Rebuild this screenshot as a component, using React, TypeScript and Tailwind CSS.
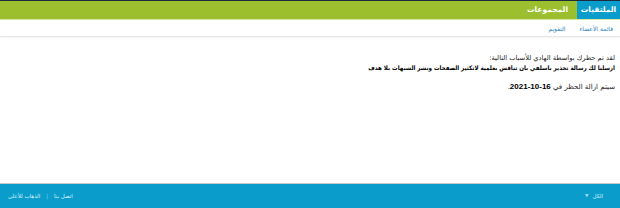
import React from 'react';

const App: React.FC = () => {
  return (
    <div dir="rtl" className="h-[208px] w-full flex flex-col bg-white font-['DejaVu_Sans',sans-serif] overflow-hidden">
      {/* top bar */}
      <div className="h-px bg-[#1d2c3d]"></div>
      <div className="h-[18px] bg-[#9cbf2e] flex items-stretch">
        <div className="w-[43px] bg-[#0a9dcc] flex items-center justify-center text-white text-[7.5px] font-bold">الملتقيات</div>
        <div className="px-[9px] flex items-center text-white text-[7.5px] font-bold">المجموعات</div>
      </div>
      <div className="h-px bg-[#d6e8a0]"></div>

      {/* sub nav */}
      <div className="h-[17px] flex items-center gap-[14px] pr-[7px] border-b border-[#e6e6e6] shadow-[0_1px_2px_rgba(0,0,0,0.05)]">
        <a className="text-[6px] text-[#2a7fc0]">قائمة الأعضاء</a>
        <a className="text-[6px] text-[#2a7fc0]">التقويم</a>
      </div>

      {/* content */}
      <div className="pr-[5px] pt-[16px] leading-[10px] text-[#222]">
        <div className="text-[6.7px]">لقد تم حظرك بواسطة الهادي للأسباب التالية:</div>
        <div className="font-bold text-black text-[6.2px] font-['DejaVu_Sans_Condensed','DejaVu_Sans',sans-serif]">ارسلنا لك رسالة تحذير باسلفي بان تناقش بعلمية لاتكثير الصفحات ونشر الشبهات بلا هدف</div>
        <div className="mt-[9px] text-[7px]">
          سيتم ازالة الحظر في <span className="font-bold text-[8px] text-black font-['Liberation_Sans',sans-serif]">16-10-2021</span>.
        </div>
      </div>

      <div className="flex-1"></div>

      {/* footer */}
      <div className="h-px bg-[#c8c8c8]"></div>
      <div className="h-[24px] bg-[#0a9dcc] flex items-center justify-between pr-[17px] pl-[8px] text-white text-[5.5px]">
        <div className="flex items-center gap-[4px]">
          <span className="text-[#cfeefa]">الكل</span>
          <span className="text-[4.5px] text-[#9fd9ef]">▼</span>
        </div>
        <div className="flex items-center gap-[6px] text-[#d8f1fb]">
          <span>اتصل بنا</span>
          <span className="text-[#7fcde9]">|</span>
          <span>الذهاب للأعلى</span>
        </div>
      </div>
    </div>
  );
};

export default App;
